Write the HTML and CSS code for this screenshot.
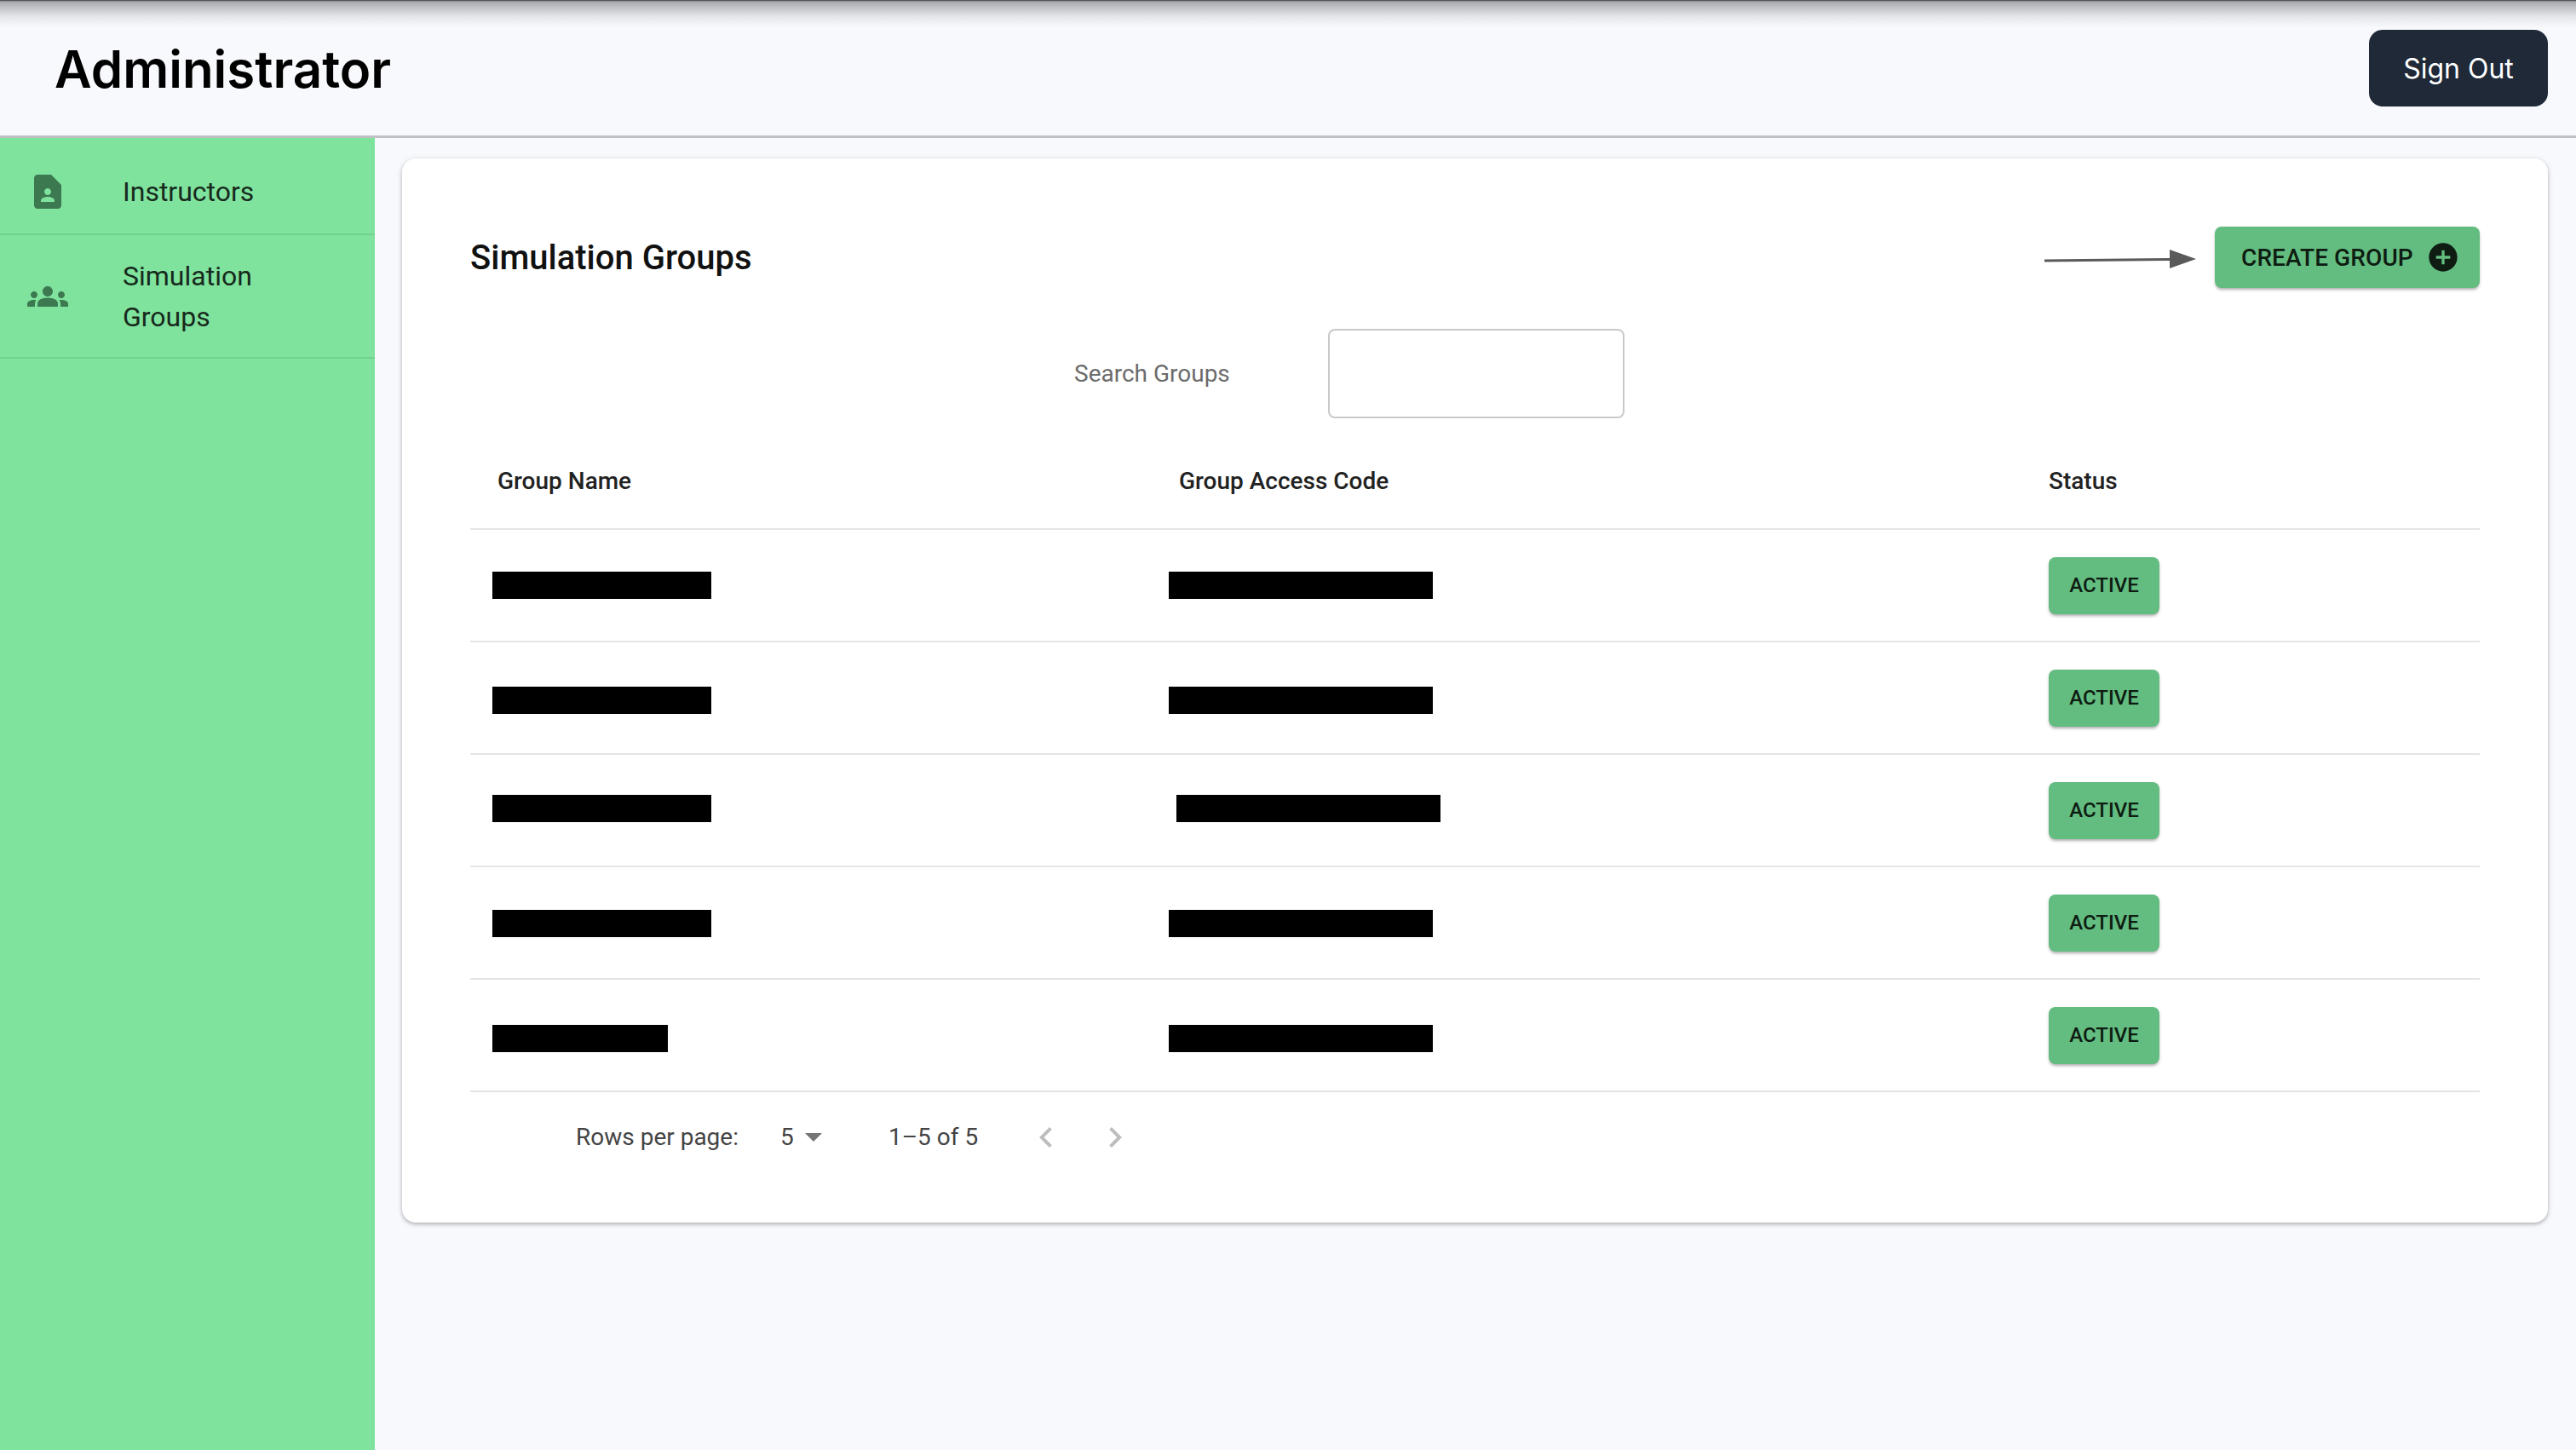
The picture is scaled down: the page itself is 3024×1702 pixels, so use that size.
FILE: index.html
```html
<!DOCTYPE html>
<html lang="en">
<head>
    <meta charset="UTF-8">
    <meta name="viewport" content="width=device-width, initial-scale=1.0">
    <title>Administrator</title>
    <link rel="stylesheet" href="styles.css">
</head>
<body>
    <header class="topbar">
        <h1>Administrator</h1>
        <button class="sign-out">Sign Out</button>
    </header>

    <div class="layout">
        <nav class="sidebar">
            <a class="nav-item">
                <svg class="nav-icon" viewBox="0 0 24 24"><path d="M14 2H6c-1.1 0-1.99.9-1.99 2L4 20c0 1.1.89 2 1.99 2H18c1.1 0 2-.9 2-2V8l-6-6zm-2 8c1.1 0 2 .9 2 2s-.9 2-2 2-2-.9-2-2 .9-2 2-2zm4 8H8v-.57c0-.81.48-1.53 1.22-1.85.85-.37 1.79-.58 2.78-.58.99 0 1.93.21 2.78.58.74.32 1.22 1.04 1.22 1.85V18z"/></svg>
                <span>Instructors</span>
            </a>
            <a class="nav-item">
                <svg class="nav-icon" viewBox="0 0 24 24"><path d="M12 12.75c1.63 0 3.07.39 4.24.9 1.08.48 1.76 1.56 1.76 2.74V18H6v-1.61c0-1.18.68-2.26 1.76-2.74 1.17-.51 2.61-.9 4.24-.9zM4 13c1.1 0 2-.9 2-2s-.9-2-2-2-2 .9-2 2 .9 2 2 2zm1.13 1.1c-.37-.06-.74-.1-1.13-.1-.99 0-1.93.21-2.78.58C.48 14.9 0 15.62 0 16.43V18h4.5v-1.61c0-.83.23-1.61.63-2.29zM20 13c1.1 0 2-.9 2-2s-.9-2-2-2-2 .9-2 2 .9 2 2 2zm4 3.43c0-.81-.48-1.53-1.22-1.85-.85-.37-1.79-.58-2.78-.58-.39 0-.76.04-1.13.1.4.68.63 1.46.63 2.29V18H24v-1.57zM12 6c1.66 0 3 1.34 3 3s-1.34 3-3 3-3-1.34-3-3 1.34-3 3-3z"/></svg>
                <span>Simulation Groups</span>
            </a>
        </nav>

        <main class="content">
            <section class="card">
                <div class="card-head">
                    <h2>Simulation Groups</h2>
                    <svg class="arrow" viewBox="0 0 180 24"><path d="M1 14 L150 12.5" stroke="#5a5a5a" stroke-width="3" fill="none"/><path d="M148 1 L179 12 L148 23 Z" fill="#5a5a5a"/></svg>
                    <button class="btn-create">
                        Create Group
                        <svg class="plus" viewBox="0 0 24 24"><path d="M12 2C6.48 2 2 6.48 2 12s4.48 10 10 10 10-4.48 10-10S17.52 2 12 2zm5 11h-4v4h-2v-4H7v-2h4V7h2v4h4v2z"/></svg>
                    </button>
                </div>

                <div class="search">
                    <label for="search_groups">Search Groups</label>
                    <input type="text" id="search_groups" name="search_groups">
                </div>

                <div class="table">
                    <div class="row row-head">
                        <div class="col-name">Group Name</div>
                        <div class="col-code">Group Access Code</div>
                        <div class="col-status">Status</div>
                    </div>
                    <div class="row">
                        <div class="col-name"><span class="redact redact-name"></span></div>
                        <div class="col-code"><span class="redact redact-code"></span></div>
                        <div class="col-status"><button class="btn-active">Active</button></div>
                    </div>
                    <div class="row">
                        <div class="col-name"><span class="redact redact-name"></span></div>
                        <div class="col-code"><span class="redact redact-code"></span></div>
                        <div class="col-status"><button class="btn-active">Active</button></div>
                    </div>
                    <div class="row">
                        <div class="col-name"><span class="redact redact-name"></span></div>
                        <div class="col-code"><span class="redact redact-code redact-shift"></span></div>
                        <div class="col-status"><button class="btn-active">Active</button></div>
                    </div>
                    <div class="row">
                        <div class="col-name"><span class="redact redact-name"></span></div>
                        <div class="col-code"><span class="redact redact-code"></span></div>
                        <div class="col-status"><button class="btn-active">Active</button></div>
                    </div>
                    <div class="row">
                        <div class="col-name"><span class="redact redact-short"></span></div>
                        <div class="col-code"><span class="redact redact-code"></span></div>
                        <div class="col-status"><button class="btn-active">Active</button></div>
                    </div>
                </div>

                <div class="pager">
                    <span class="pager-label">Rows per page:</span>
                    <span class="pager-select">5<svg class="caret" viewBox="0 0 20 10"><path d="M0 0h20L10 10z"/></svg></span>
                    <span class="pager-count">1–5 of 5</span>
                    <svg class="chevron" viewBox="0 0 24 24"><path d="M15.41 7.41 14 6l-6 6 6 6 1.41-1.41L10.83 12z"/></svg>
                    <svg class="chevron chevron-next" viewBox="0 0 24 24"><path d="M10 6 8.59 7.41 13.17 12l-4.58 4.59L10 18l6-6z"/></svg>
                </div>
            </section>
        </main>
    </div>
</body>
</html>
```

FILE: styles.css
```css
* {
    box-sizing: border-box;
}

html, body {
    height: 100%;
}

body {
    margin: 0;
    font-family: Roboto, "Liberation Sans", sans-serif;
    background-color: #f8f9fd;
    color: #212121;
    display: flex;
    flex-direction: column;
    overflow: hidden;
}

button {
    font-family: inherit;
    border: none;
}

.topbar {
    height: 162px;
    flex: none;
    display: flex;
    align-items: center;
    justify-content: space-between;
    padding: 0 33px 0 64px;
    background: linear-gradient(to bottom, #3a3a3c 0, #a9aaad 2px, #c6c7cb 10px, #e6e7eb 20px, #f8f9fd 32px);
    border-bottom: 3px solid #bfc0c3;
}

.topbar h1 {
    margin: 2px 0 0;
    font-family: Inter, Roboto, sans-serif;
    font-size: 60px;
    font-weight: 600;
    color: #000;
}

.sign-out {
    width: 210px;
    height: 90px;
    margin-top: 1px;
    border-radius: 16px;
    background-color: #1f2937;
    color: #fff;
    font-family: Inter, Roboto, sans-serif;
    font-size: 32px;
}

.layout {
    flex: 1;
    display: flex;
    min-height: 0;
}

.sidebar {
    width: 440px;
    flex: none;
    padding-top: 14px;
    background-color: #7fe39d;
}

.nav-item {
    display: flex;
    align-items: center;
    gap: 64px;
    padding: 0 48px 0 32px;
    min-height: 100px;
    font-size: 32px;
    line-height: 48px;
    color: #17291c;
    border-bottom: 2px solid #72d18f;
}

.nav-item + .nav-item {
    min-height: 145px;
}

.nav-icon {
    width: 48px;
    height: 48px;
    flex: none;
    fill: #3c7850;
}

.content {
    flex: 1;
    padding: 24px 33px 0 32px;
}

.card {
    height: 1249px;
    padding: 80px;
    background-color: #fff;
    border-radius: 16px;
    box-shadow: 0 2px 4px rgba(0, 0, 0, 0.25), 0 1px 8px rgba(0, 0, 0, 0.08);
}

.card-head {
    display: flex;
    align-items: center;
    height: 72px;
}

.card-head h2 {
    flex: 1;
    margin: 0;
    font-size: 40px;
    font-weight: 500;
    color: #111;
}

.arrow {
    width: 180px;
    height: 24px;
    margin: 4px 21px 0 0;
}

.btn-create {
    width: 311px;
    height: 72px;
    display: flex;
    align-items: center;
    justify-content: space-between;
    padding: 0 23px 0 31px;
    border-radius: 8px;
    background-color: #63bc80;
    color: #0e1c12;
    font-size: 28px;
    font-weight: 500;
    letter-spacing: 0.1px;
    text-transform: uppercase;
    box-shadow: 0 3px 3px -1px rgba(0, 0, 0, 0.2), 0 2px 4px rgba(0, 0, 0, 0.14);
}

.plus {
    width: 40px;
    height: 40px;
    fill: #0e1c12;
}

.search {
    display: flex;
    align-items: center;
    margin-top: 48px;
    padding-left: 709px;
}

.search label {
    width: 298px;
    font-size: 28px;
    color: #6b6b6b;
}

.search input {
    width: 348px;
    height: 105px;
    border: 2px solid #c9c9c9;
    border-radius: 8px;
    background-color: #fff;
}

.table {
    margin-top: 17px;
}

.row {
    display: flex;
    align-items: center;
    height: 132px;
    border-bottom: 2px solid #e4e4e4;
}

.row-head {
    height: 114px;
    font-size: 28px;
    font-weight: 500;
    color: #222;
}

.col-name {
    width: 800px;
    padding-left: 26px;
}

.col-code {
    width: 1053px;
}

.row-head .col-name {
    padding-left: 32px;
}

.row-head .col-code {
    padding-left: 32px;
}

.redact {
    display: block;
    height: 32px;
    background-color: #000;
}

.redact-name {
    width: 257px;
}

.redact-short {
    width: 206px;
}

.redact-code {
    width: 310px;
    margin-left: 20px;
}

.redact-shift {
    margin-left: 29px;
}

/* the black bars were painted by hand, they don't sit on the row centre */
.row:nth-child(3) .redact {
    margin-top: 6px;
}

.row:nth-child(4) .redact {
    margin-top: -4px;
}

.row:nth-child(5) .redact {
    margin-top: 2px;
}

.row:nth-child(6) .redact {
    margin-top: 8px;
}

.btn-active {
    display: block;
    width: 130px;
    height: 67px;
    border-radius: 8px;
    background-color: #63bc80;
    color: #0e1c12;
    font-size: 24px;
    font-weight: 500;
    text-transform: uppercase;
    box-shadow: 0 3px 3px -1px rgba(0, 0, 0, 0.2), 0 2px 4px rgba(0, 0, 0, 0.14);
}

.pager {
    display: flex;
    align-items: center;
    height: 105px;
    padding-left: 124px;
    font-size: 28px;
    color: #444;
}

.pager-label {
    width: 240px;
}

.pager-select {
    width: 127px;
    display: flex;
    align-items: center;
    gap: 13px;
}

.caret {
    width: 20px;
    height: 10px;
    fill: #757575;
}

.pager-count {
    width: 161px;
}

.chevron {
    width: 48px;
    height: 48px;
    fill: #bdbdbd;
}

.chevron-next {
    margin-left: 33px;
}
```
